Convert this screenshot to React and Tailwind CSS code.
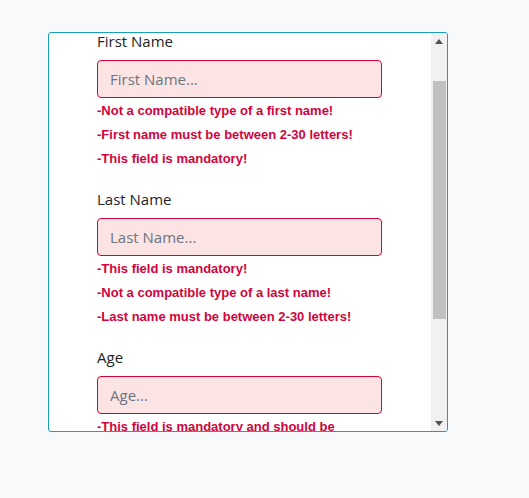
import { useEffect, useRef } from "react";

const fields = [
  {
    label: "First Name",
    placeholder: "First Name...",
    errors: [
      "-Not a compatible type of a first name!",
      "-First name must be between 2-30 letters!",
      "-This field is mandatory!",
    ],
  },
  {
    label: "Last Name",
    placeholder: "Last Name...",
    errors: [
      "-This field is mandatory!",
      "-Not a compatible type of a last name!",
      "-Last name must be between 2-30 letters!",
    ],
  },
  {
    label: "Age",
    placeholder: "Age...",
    errors: [
      "-This field is mandatory and should be positive number!",
      "-Age must be between 1-120!",
    ],
  },
];

export default function App() {
  const boxRef = useRef(null);

  useEffect(() => {
    // the form is shown scrolled a little way down
    if (boxRef.current) boxRef.current.scrollTop = 57;
  }, []);

  return (
    <div className="min-h-screen bg-[#f8f9fa] pt-[32px] pl-[48px]">
      <div className="flex w-[400px] h-[400px] bg-white border border-[#17a2b8] rounded-[3px] overflow-hidden">
        <div ref={boxRef} className="flex-1 h-full overflow-hidden">
          <div className="pl-[48px] pt-[53px] pb-[40px] w-[333px]">
            {fields.map((f) => (
              <div key={f.label} className="mb-[16px]">
                <label
                  className="block mb-[7px] text-[15px] leading-[24px] text-[#212529]"
                  style={{ fontFamily: '"Open Sans", sans-serif' }}
                >
                  {f.label}
                </label>
                <input
                  className="block w-[285px] h-[38px] px-3 rounded-[4px] border border-[#d0043c] bg-[#fce4e4] text-[15px] placeholder:text-[#6c757d] outline-none"
                  style={{ fontFamily: '"Open Sans", sans-serif' }}
                  placeholder={f.placeholder}
                />
                <div className="mt-px">
                  {f.errors.map((e) => (
                    <p
                      key={e}
                      className="text-[13px] leading-[24px] font-bold text-[#d0043c] font-['Liberation_Sans',Arial,sans-serif]"
                    >
                      {e}
                    </p>
                  ))}
                </div>
              </div>
            ))}
            <button className="px-4 py-2 rounded-[4px] bg-[#17a2b8] text-white text-[15px] font-['Open_Sans',sans-serif]">
              Submit
            </button>
          </div>
        </div>

        {/* scrollbar */}
        <div className="w-[16px] h-full flex flex-col bg-[#f1f1f1]">
          <div className="h-[16px] flex items-center justify-center">
            <svg width="8" height="5" viewBox="0 0 8 5">
              <path d="M0 5 L4 0 L8 5 Z" fill="#505050" />
            </svg>
          </div>
          <div className="flex-1 pl-[2px] pr-px">
            <div className="mt-[32px] h-[238px] bg-[#c1c1c1]"></div>
          </div>
          <div className="h-[16px] flex items-center justify-center">
            <svg width="8" height="5" viewBox="0 0 8 5">
              <path d="M0 0 L8 0 L4 5 Z" fill="#505050" />
            </svg>
          </div>
        </div>
      </div>
    </div>
  );
}
